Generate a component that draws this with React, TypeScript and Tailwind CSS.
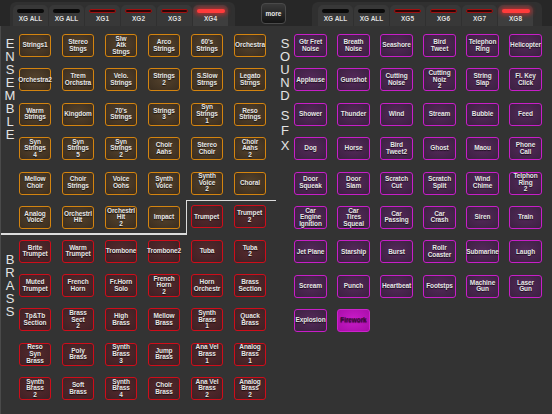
import React from 'react';

type Tone = 'ens' | 'brass' | 'sfx' | 'sfxOn';

const tones: Record<Tone, string> = {
  ens: 'border-[#d4840f] bg-[radial-gradient(ellipse_at_50%_45%,#55432d,#3a2d1f)] text-[#e6e6e6]',
  brass: 'border-[#cf0d1a] bg-[radial-gradient(ellipse_at_50%_45%,#552a2d,#3f2024)] text-[#e6e6e6]',
  sfx: 'border-[#c81ec8] bg-[radial-gradient(ellipse_at_50%_45%,#55295a,#3a2140)] text-[#e6e6e6]',
  sfxOn: 'border-[#cc22cc] bg-[radial-gradient(ellipse_at_50%_45%,#c81cc8,#a80ca8)] text-[#3a0a3a]',
};

const ensemble = [
  ['Strings1', 'Stereo\nStngs', 'Slw\nAtk\nStngs', 'Arco\nStrings', "60's\nStrings", 'Orchestra'],
  ['Orchestra2', 'Trem\nOrchstra', 'Velo.\nStrings', 'Strings\n2', 'S.Slow\nStrngs', 'Legato\nStrngs'],
  ['Warm\nStrings', 'Kingdom', "70's\nStrings", 'Strings\n3', 'Syn\nStrings\n1', 'Reso\nStrings'],
  ['Syn\nStrings\n4', 'Syn\nStrings\n5', 'Syn\nStrings\n2', 'Choir\nAahs', 'Stereo\nChoir', 'Choir\nAahs\n2'],
  ['Mellow\nChoir', 'Choir\nStrings', 'Voice\nOohs', 'Synth\nVoice', 'Synth\nVoice\n2', 'Choral'],
];
const ensembleLast = ['Analog\nVoice', 'Orchestrl\nHit', 'Orchestrl\nHit\n2', 'Impact'];

const brass = [
  ['Brite\nTrumpet', 'Warm\nTrumpet', 'Trombone', 'Trombone2', 'Tuba', 'Tuba\n2'],
  ['Muted\nTrumpet', 'French\nHorn', 'Fr.Horn\nSolo', 'French\nHorn\n2', 'Horn\nOrchestr', 'Brass\nSection'],
  ['Tp&Tb\nSection', 'Brass\nSect\n2', 'High\nBrass', 'Mellow\nBrass', 'Synth\nBrass\n1', 'Quack\nBrass'],
  ['Reso\nSyn\nBrass', 'Poly\nBrass', 'Synth\nBrass\n3', 'Jump\nBrass', 'Ana Vel\nBrass\n1', 'Analog\nBrass\n1'],
  ['Synth\nBrass\n2', 'Soft\nBrass', 'Synth\nBrass\n4', 'Choir\nBrass', 'Ana Vel\nBrass\n2', 'Analog\nBrass\n2'],
];

const sfx = [
  ['Gtr Fret\nNoise', 'Breath\nNoise', 'Seashore', 'Bird\nTweet', 'Telephon\nRing', 'Helicopter'],
  ['Applause', 'Gunshot', 'Cutting\nNoise', 'Cutting\nNoiz\n2', 'String\nSlap', 'Fl. Key\nClick'],
  ['Shower', 'Thunder', 'Wind', 'Stream', 'Bubble', 'Feed'],
  ['Dog', 'Horse', 'Bird\nTweet2', 'Ghost', 'Maou', 'Phone\nCall'],
  ['Door\nSqueak', 'Door\nSlam', 'Scratch\nCut', 'Scratch\nSplit', 'Wind\nChime', 'Telphon\nRing\n2'],
  ['Car\nEngine\nIgnition', 'Car\nTires\nSqueal', 'Car\nPassing', 'Car\nCrash', 'Siren', 'Train'],
  ['Jet Plane', 'Starship', 'Burst', 'Rollr\nCoaster', 'Submarine', 'Laugh'],
  ['Scream', 'Punch', 'Heartbeat', 'Footstps', 'Machine\nGun', 'Laser\nGun'],
  ['Explosion'],
];

const leftTabs = [
  { label: 'XG ALL', led: 'off' },
  { label: 'XG ALL', led: 'off' },
  { label: 'XG1', led: 'dim' },
  { label: 'XG2', led: 'dim' },
  { label: 'XG3', led: 'dim' },
  { label: 'XG4', led: 'on' },
];
const rightTabs = [
  { label: 'XG ALL', led: 'off' },
  { label: 'XG ALL', led: 'off' },
  { label: 'XG5', led: 'dim' },
  { label: 'XG6', led: 'dim' },
  { label: 'XG7', led: 'dim' },
  { label: 'XG8', led: 'on' },
];

const font = { fontFamily: '"Liberation Sans", Arial, sans-serif' };

export default function App() {
  return (
    <div className="w-[552px] h-[414px] overflow-hidden bg-[#333333] flex flex-col" style={font}>
      <Header />
      <div className="flex flex-1 border-l border-[#4a4a4a]">
        <div className="w-[275px] flex flex-col pt-[8px]">
          <div className="flex">
            <Letters text="ENSEMBLE" className="w-[18px] pt-[3px]" />
            <div className="grid grid-cols-[repeat(6,32px)] auto-rows-[23px] gap-x-[11px] gap-y-[11.4px]">
              {ensemble.flat().map((t, i) => (
                <Pad key={i} label={t} tone="ens" />
              ))}
              {ensembleLast.map((t) => (
                <Pad key={t} label={t} tone="ens" />
              ))}
              <div className="col-span-2 -ml-[5.5px] -mt-[5.7px] -mb-[5.7px] -mr-[10px] border-l-[1.5px] border-t-[1.5px] border-[#dcdcdc] pl-[4px] pt-[4.2px] grid grid-cols-[repeat(2,32px)] gap-x-[11px] items-start">
                <Pad label="Trumpet" tone="brass" />
                <Pad label={'Trumpet\n2'} tone="brass" />
              </div>
            </div>
          </div>
          <div className="h-[1.5px] w-[185px] bg-[#dcdcdc] mt-[4.2px] mb-[5px]" />
          <div className="flex">
            <Letters text="BRASS" className="w-[18px] pt-[13px]" />
            <div className="grid grid-cols-[repeat(6,32px)] auto-rows-[23px] gap-x-[11px] gap-y-[11.4px]">
              {brass.flat().map((t, i) => (
                <Pad key={i} label={t} tone="brass" />
              ))}
            </div>
          </div>
        </div>
        <div className="flex-1 flex pt-[8px]">
          <div className="w-[18px] flex flex-col items-center pt-[3px] text-[13px] leading-[13px] text-[#e4e4e4]">
            {'SOUND'.split('').map((c, i) => (
              <span key={i}>{c}</span>
            ))}
            <div className="h-[6px]" />
            {'SFX'.split('').map((c, i) => (
              <span key={i} className="leading-[15px]">{c}</span>
            ))}
          </div>
          <div className="grid grid-cols-[repeat(6,33px)] auto-rows-[23px] gap-x-[10px] gap-y-[11.4px] content-start">
            {sfx.flat().map((t, i) => (
              <Pad key={i} label={t} tone="sfx" />
            ))}
            <Pad label="Firework" tone="sfxOn" />
          </div>
        </div>
      </div>
    </div>
  );
}

function Header() {
  return (
    <div className="h-[26px] shrink-0 flex bg-[#272727]">
      <div className="w-[10px] bg-[#272727]" />
      <div className="flex items-end pl-[3px] pr-[6px] bg-[#303030] rounded-t-[6px] mt-[2px]">
        <TabGroup tabs={leftTabs} />
      </div>
      <div className="flex-1 flex items-start justify-center pt-[3px]">
        <div className="w-[25px] h-[21px] rounded-[4px] border border-[#4a4a4a] bg-[linear-gradient(#3a3a3a,#141414)] flex items-center justify-center text-[6.5px] font-bold text-[#e8e8e8]">
          more
        </div>
      </div>
      <div className="flex items-end pl-[6px] pr-[8px] bg-[#303030] rounded-t-[6px] mt-[2px]">
        <TabGroup tabs={rightTabs} />
      </div>
      <div className="w-[10px]" />
    </div>
  );
}

function TabGroup({ tabs }: { tabs: { label: string; led: string }[] }) {
  return (
    <div className="flex h-[21px]">
      {tabs.map((t, i) => (
        <div
          key={i}
          className={`w-[35px] mr-[1px] rounded-t-[5px] flex flex-col items-center pt-[4px] ${
            t.led === 'on' ? 'bg-[#3e3e3e]' : 'bg-[#383838]'
          }`}
        >
          <Led state={t.led} />
          <span className="mt-[3px] text-[6.5px] leading-none font-bold text-[#dedede] whitespace-nowrap">{t.label}</span>
        </div>
      ))}
    </div>
  );
}

function Led({ state }: { state: string }) {
  if (state === 'on')
    return <div className="w-[28px] h-[4px] rounded-full bg-[#ff3b3b] shadow-[0_0_4px_2px_rgba(255,40,40,0.55)]" />;
  if (state === 'dim')
    return <div className="w-[27px] h-[3.5px] rounded-full bg-[#2a0606] border border-[#a01010]" />;
  return <div className="w-[27px] h-[3.5px] rounded-full bg-[#0a0a0a]" />;
}

function Letters({ text, className }: { text: string; className: string }) {
  return (
    <div className={`flex flex-col items-center text-[13px] leading-[13px] text-[#e4e4e4] ${className}`}>
      {text.split('').map((c, i) => (
        <span key={i}>{c}</span>
      ))}
    </div>
  );
}

function Pad({ label, tone }: { label: string; tone: Tone }) {
  return (
    <div
      className={`h-[23px] rounded-[3px] border-[1.5px] flex flex-col items-center justify-center text-center font-bold text-[6.5px] leading-[6.6px] whitespace-nowrap tracking-[-0.1px] [text-shadow:0_1px_1px_rgba(0,0,0,0.7)] ${tones[tone]}`}
    >
      {label.split('\n').map((l, i) => (
        <span key={i}>{l}</span>
      ))}
    </div>
  );
}
